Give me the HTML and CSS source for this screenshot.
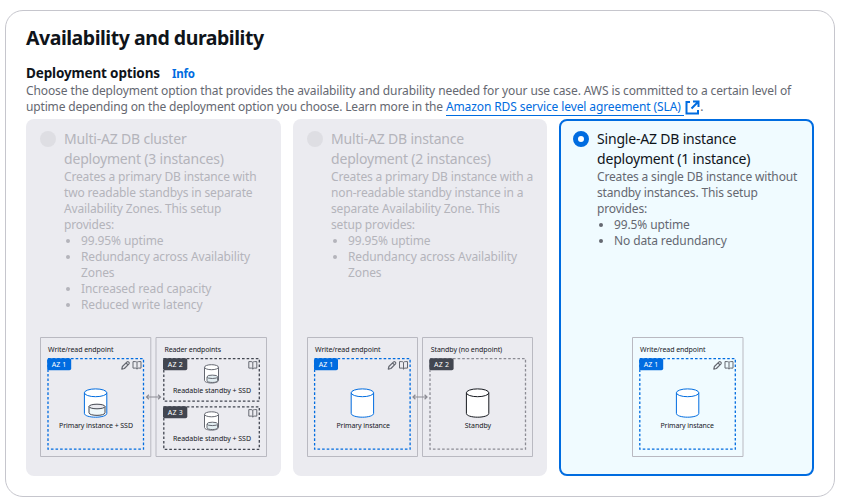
FILE: index.html
```html
<!DOCTYPE html>
<html lang="en">
<head>
<meta charset="utf-8">
<title>Availability and durability</title>
<link rel="stylesheet" href="styles.css">
</head>
<body>
<svg class="defs" width="0" height="0" aria-hidden="true">
  <defs>
    <g id="cylinder">
      <path d="M.7 4.6v20.6c0 2.2 5 3.8 11.2 3.8s11.2-1.6 11.2-3.8V4.6" fill="#fff"/>
      <ellipse cx="11.9" cy="4.6" rx="11.2" ry="3.9" fill="#fff"/>
    </g>
    <g id="cylinder-small">
      <path d="M.5 3v13.2c0 1.5 3.2 2.6 7 2.6s7-1.1 7-2.6V3" fill="#fff"/>
      <ellipse cx="7.5" cy="3" rx="7" ry="2.5" fill="#fff"/>
      <path d="M3 12.6v4c0 2.2 10.6 2.2 10.6 0v-4" fill="#e3eef2"/>
      <ellipse cx="8.3" cy="12.6" rx="5.3" ry="1.7" fill="#e3eef2"/>
    </g>
    <g id="pencil" fill="none" stroke="#656871" stroke-width="1.2" stroke-linejoin="round">
      <path d="M.8 8.2l.6-2.7L6.1.9q.7-.6 1.4 0l.5.5q.6.7 0 1.4L3.4 7.5zM5.1 2l1.9 1.9"/>
    </g>
    <g id="book" fill="none" stroke="#656871" stroke-width="1">
      <path d="M4.5 1.4Q3.8.6 2.8.6H.5v6.5h2.6q.9 0 1.4.8.5-.8 1.4-.8h2.6V.6H6.2q-1 0-1.7.8zM4.5 1.4v7"/>
    </g>
    <g id="arrows" fill="none" stroke="#8c8c94" stroke-width="1.2">
      <path d="M1 3h14M3.4.8L1 3l2.4 2.2M12.6.8L15 3l-2.4 2.2"/>
    </g>
  </defs>
</svg>
<section class="panel">
  <h2 class="title">Availability and durability</h2>
  <div class="field-label"><span class="label-text">Deployment options</span><a class="info">Info</a></div>
  <p class="description">Choose the deployment option that provides the availability and durability needed for your use case. AWS is committed to a certain level of<br><span class="lead">uptime depending on the deployment option you choose. Learn more in the </span><a class="link">Amazon RDS service level agreement (SLA)</a><svg class="external" width="15" height="15" viewBox="0 0 15 15" fill="none" stroke="#006ce0" stroke-width="2"><path d="M5 2H1.5v11.5H13V10M8 1.5h5.5V7M13.2 1.8L6.5 8.5"/></svg>.</p>

  <div class="tiles">
    <label class="tile disabled">
      <span class="head">
        <span class="radio"></span>
        <span class="copy">
          <span class="name">Multi-AZ DB cluster<br>deployment (3 instances)</span>
          <span class="detail">Creates a primary DB instance with<br>two readable standbys in separate<br>Availability Zones. This setup<br>provides:</span>
          <ul class="features"><li>99.95% uptime</li><li>Redundancy across Availability<br>Zones</li><li>Increased read capacity</li><li>Reduced write latency</li></ul>
        </span>
      </span>
      <svg class="diagram" width="228" height="121" viewBox="0 0 228 121">
        <path class="frame" d="M.5.5h110.3v119H.5zM116 .5h110.5v119H116z"/>
        <text x="8" y="15" textLength="65.5">Write/read endpoint</text>
        <text x="124.5" y="15" textLength="56.5">Reader endpoints</text>
        <rect class="zone blue" x="8" y="21.7" width="95.5" height="90.5"/>
        <rect class="zone dark" x="123.8" y="21.7" width="95.5" height="42.5"/>
        <rect class="zone dark" x="123.8" y="69.8" width="95.5" height="42.5"/>
        <rect x="7.2" y="21.3" width="24" height="12" rx="1.8" fill="#006ce0"/><text class="tag" x="11.8" y="29.6" textLength="14.5">AZ 1</text>
        <rect x="123" y="21.3" width="24.3" height="12" rx="1.8" fill="#424650"/><text class="tag" x="127.8" y="29.6" textLength="15">AZ 2</text>
        <rect x="123" y="69.3" width="24.3" height="12" rx="1.8" fill="#424650"/><text class="tag" x="127.8" y="77.6" textLength="15">AZ 3</text>
        <use href="#pencil" x="81" y="24"/><use href="#book" x="92.5" y="24"/>
        <use href="#book" x="208.3" y="24"/><use href="#book" x="208.3" y="72"/>
        <use href="#arrows" x="105.5" y="57"/>
        <use href="#cylinder" x="43.7" y="51.2" stroke="#006ce0"/>
        <g stroke="#424650" fill="#ebebf0"><path d="M49 69.5v6.3c0 3.4 16 3.4 16 0v-6.3" fill="#f0f8fa"/><ellipse cx="57" cy="69.5" rx="8" ry="2.3"/></g>
        <use href="#cylinder-small" x="164" y="27.2" stroke="#656871"/><use href="#cylinder-small" x="164" y="74.3" stroke="#656871"/>
        <text x="19" y="91" textLength="74">Primary instance + SSD</text>
        <text x="133" y="56" textLength="78">Readable standby + SSD</text>
        <text x="133" y="104" textLength="78">Readable standby + SSD</text>
      </svg>
    </label>

    <label class="tile disabled">
      <span class="head">
        <span class="radio"></span>
        <span class="copy">
          <span class="name">Multi-AZ DB instance<br>deployment (2 instances)</span>
          <span class="detail">Creates a primary DB instance with a<br>non-readable standby instance in a<br>separate Availability Zone. This<br>setup provides:</span>
          <ul class="features"><li>99.95% uptime</li><li>Redundancy across Availability<br>Zones</li></ul>
        </span>
      </span>
      <svg class="diagram" width="228" height="121" viewBox="0 0 228 121">
        <path class="frame" d="M.5.5h110v119H.5zM115.5.5h110v119h-110z"/>
        <text x="8" y="15" textLength="65.5">Write/read endpoint</text>
        <text x="123.7" y="15" textLength="71.5">Standby (no endpoint)</text>
        <rect class="zone blue" x="7.6" y="21.7" width="95.5" height="90.5"/>
        <rect class="zone gray" x="123" y="21.7" width="95.5" height="90.5"/>
        <rect x="7" y="21.3" width="24" height="12" rx="1.8" fill="#006ce0"/><text class="tag" x="11.8" y="29.6" textLength="14.5">AZ 1</text>
        <rect x="122.3" y="21.3" width="24.3" height="12" rx="1.8" fill="#424650"/><text class="tag" x="127" y="29.6" textLength="15">AZ 2</text>
        <use href="#pencil" x="80.5" y="24"/><use href="#book" x="92" y="24"/>
        <use href="#arrows" x="105" y="57"/>
        <use href="#cylinder" x="43.5" y="51.2" stroke="#006ce0"/>
        <use href="#cylinder" x="158.7" y="51.2" stroke="#16191f"/>
        <text x="29.5" y="91" textLength="53.5">Primary instance</text>
        <text x="157.7" y="91" textLength="26.5">Standby</text>
      </svg>
    </label>

    <label class="tile selected">
      <span class="head">
        <span class="radio"></span>
        <span class="copy">
          <span class="name">Single-AZ DB instance<br>deployment (1 instance)</span>
          <span class="detail">Creates a single DB instance without<br>standby instances. This setup<br>provides:</span>
          <ul class="features"><li>99.5% uptime</li><li>No data redundancy</li></ul>
        </span>
      </span>
      <svg class="diagram single" width="112" height="121" viewBox="0 0 112 121">
        <path class="frame" d="M.5.5H111v119H.5z"/>
        <text x="8" y="15" textLength="65.5">Write/read endpoint</text>
        <rect class="zone blue" x="7.8" y="21.7" width="95.5" height="90.5"/>
        <rect x="7.2" y="21.3" width="24" height="12" rx="1.8" fill="#006ce0"/><text class="tag" x="11.8" y="29.6" textLength="14.5">AZ 1</text>
        <use href="#pencil" x="81" y="24"/><use href="#book" x="92.5" y="24"/>
        <use href="#cylinder" x="43.7" y="51.2" stroke="#006ce0"/>
        <text x="28.5" y="91" textLength="53.5">Primary instance</text>
      </svg>
    </label>
  </div>
</section>
</body>
</html>
```

FILE: styles.css
```css
* { box-sizing: border-box; }
body {
  margin: 0;
  padding: 10px 0 0 5px;
  background: #fff;
  color: #0f141a;
  font-family: "Noto Sans", sans-serif;
  font-size: 12px;
  line-height: 16px;
}
.defs { position: absolute; }
.panel {
  width: 830px;
  height: 487px;
  padding: 15px 20px 0;
  border: 1px solid #c6c6cd;
  border-radius: 18px;
}
.title { margin: 0; font-size: 19.5px; line-height: 24px; font-weight: 700; letter-spacing: -0.47px; white-space: nowrap; }
.field-label { display: flex; align-items: baseline; gap: 12px; margin-top: 13px; height: 20px; line-height: 20px; }
.label-text { font-size: 13.5px; font-weight: 700; letter-spacing: -0.15px; }
.info { font-size: 11.5px; font-weight: 700; letter-spacing: -0.15px; color: #006ce0; }
.description { margin: 0; height: 36px; color: #656871; white-space: nowrap; letter-spacing: -0.105px; }
.lead { letter-spacing: -0.16px; }
.link { display: inline-block; height: 17px; padding-right: 3px; margin-right: 1.5px; border-bottom: 1px solid #006ce0; color: #006ce0; }
.external { vertical-align: -4px; }
.tiles { display: grid; grid-template-columns: 255px 254px 255px; gap: 12px; width: 788px; height: 357px; }
.tile { display: flex; flex-direction: column; justify-content: space-between; padding: 10px 13px 18px 14px; border-radius: 8px; white-space: nowrap; }
.disabled { background: #ebebf0; color: #b4b4bb; }
.selected { padding: 8px 11px 16px 12px; border: 2px solid #006ce0; background: #f0fbff; }
.head { display: flex; gap: 8px; }
.radio { flex: none; width: 16px; height: 16px; margin-top: 2px; border-radius: 50%; background: #dedee3; }
.selected .radio { border: 5px solid #006ce0; background: #fff; }
.name, .detail { display: block; }
.name { font-size: 14px; line-height: 20px; letter-spacing: -0.19px; }
.detail { letter-spacing: -0.15px; }
.selected .detail, .selected .features { color: #656871; }
.features { margin: 0; padding-left: 17px; letter-spacing: -0.12px; }
.diagram { display: block; flex: none; }
.single { align-self: center; margin-left: 2px; }
.frame { fill: none; stroke: #b9b9c1; }
.zone { fill: none; stroke-width: 1.3; stroke-dasharray: 2.6 2; }
.blue { stroke: #006ce0; }
.dark { stroke: #424650; }
.gray { stroke: #8c8c94; }
.diagram text { font-size: 7px; fill: #16191f; }
.diagram .tag { fill: #fff; }
```
